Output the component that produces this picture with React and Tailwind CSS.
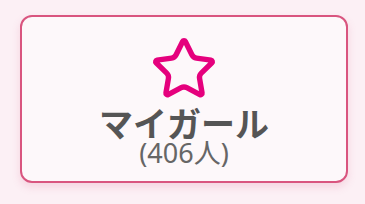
export default function App() {
  return (
    <div className="w-[365px] h-[204px] bg-[#fcf0f5] pt-[15px] pl-[20px]" style={{ fontFamily: '"Noto Sans", "Noto Sans CJK JP", sans-serif' }}>
      <div className="w-[328px] h-[168px] rounded-[12px] border-2 border-[#d9557f] bg-[#fdf8fa] shadow-[0_4px_8px_rgba(217,85,127,0.18)] flex flex-col items-center pt-[18px]">
        <svg width="68" height="68" viewBox="0 0 24 24" fill="none" stroke="#e5007d" strokeWidth="1.9" strokeLinecap="round" strokeLinejoin="round">
          <path d="M11.525 2.295a.53.53 0 0 1 .95 0l2.31 4.679a2.123 2.123 0 0 0 1.595 1.16l5.166.756a.53.53 0 0 1 .294.904l-3.736 3.638a2.123 2.123 0 0 0-.611 1.878l.882 5.14a.53.53 0 0 1-.771.56l-4.618-2.428a2.122 2.122 0 0 0-1.973 0L6.396 21.01a.53.53 0 0 1-.77-.56l.881-5.139a2.122 2.122 0 0 0-.611-1.879L2.16 9.795a.53.53 0 0 1 .294-.906l5.165-.755a2.122 2.122 0 0 0 1.597-1.16z" />
        </svg>
        <div className="mt-[4px] text-[34px] leading-[34px] font-bold text-[#555555]">マイガール</div>
        <div className="text-[27px] leading-[23px] text-[#666666]">(406人)</div>
      </div>
    </div>
  );
}
